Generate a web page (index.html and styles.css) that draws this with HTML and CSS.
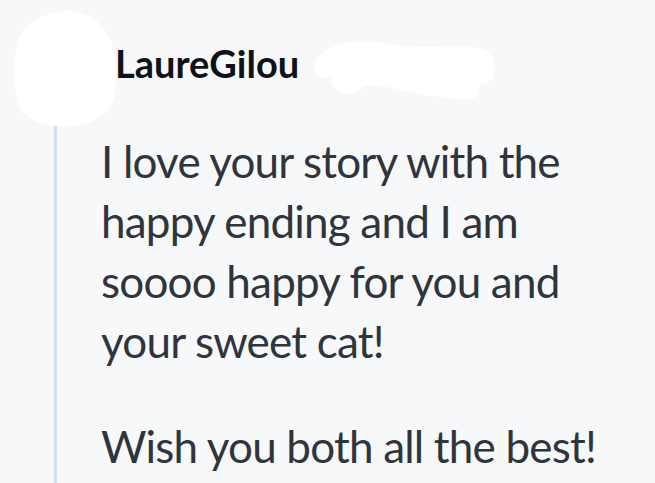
FILE: index.html
```html
<!DOCTYPE html>
<html lang="en">
<head>
<meta charset="utf-8">
<title>Comment</title>
<link rel="stylesheet" href="styles.css">
</head>
<body>
<article class="comment">
  <header class="comment-head">
    <svg class="avatar" width="102" height="116" viewBox="0 0 102 116" aria-hidden="true">
      <path d="M18 11 C28 4 40 0 55 0 C72 0 84 10 92 22 C99 34 101 50 101 66 C101 80 100 94 88 104 C76 113 62 115 45 115 C28 115 14 110 7 100 C1 90 0 76 0 60 C0 44 1 30 6 22 C9 17 13 14 18 11 Z" fill="#ffffff"/>
    </svg>
    <span class="author">LaureGilou</span>
    <svg class="meta-blob" width="184" height="62" viewBox="0 0 184 62" aria-hidden="true">
      <path d="M8 16 C16 6 34 2 60 3 C78 4 88 8 110 8 C130 8 152 6 168 10 C182 14 184 28 180 38 C177 44 170 48 166 46 C168 54 166 60 152 60 C132 60 112 56 92 52 C78 49 66 44 50 48 C44 54 36 56 30 54 C20 50 18 42 18 38 C12 40 4 38 1 30 C0 24 4 20 8 16 Z" fill="#ffffff"/>
    </svg>
  </header>
  <div class="comment-body">
    <p>I love your story with the happy ending and I am soooo happy for you and your sweet cat!</p>
    <p>Wish you both all the best!</p>
  </div>
</article>
</body>
</html>
```
FILE: styles.css
```css
html, body {
  margin: 0;
  padding: 0;
  background: #f7f8fa;
}
body {
  font-family: Lato, "Open Sans", sans-serif;
  color: #2f353b;
  overflow: hidden;
}
.comment {
  width: 655px;
}
.comment-head {
  display: flex;
  align-items: flex-start;
  padding: 11px 0 0 15px;
  height: 112px;
}
.avatar {
  flex: none;
  display: block;
}
.author {
  margin: 30px 0 0 -2px;
  font-size: 38px;
  font-weight: 700;
  color: #0f1216;
  line-height: 44px;
}
.meta-blob {
  flex: none;
  display: block;
  margin: 28px 0 0 14px;
}
.comment-body {
  margin-left: 54px;
  border-left: 3px solid #d5dfea;
  padding: 8px 0 0 44px;
  min-height: 400px;
  width: 520px;
}
.comment-body p {
  margin: 0 0 45px 0;
  font-size: 44px;
  letter-spacing: -0.8px;
  line-height: 60px;
}
```
